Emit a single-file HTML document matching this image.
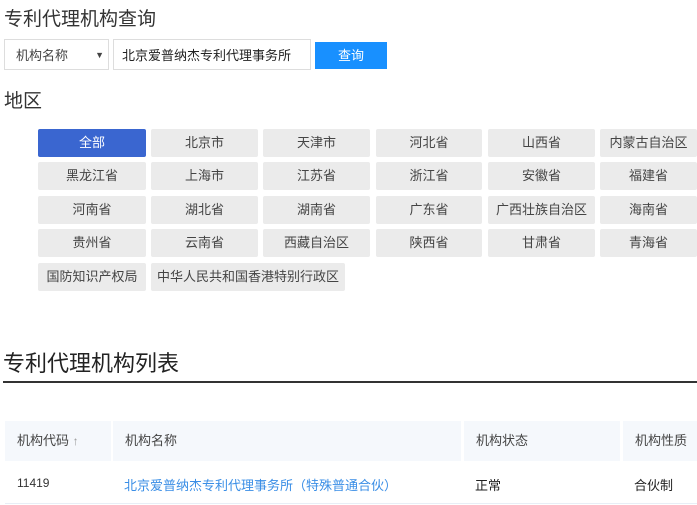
<!DOCTYPE html><html><head><meta charset="utf-8"><style>
body{margin:0;width:697px;height:505px;overflow:hidden;background:#fff;font-family:"Liberation Sans","Noto Sans CJK SC",sans-serif;color:#333;position:relative}
.a{position:absolute;white-space:nowrap}
.b{position:absolute;height:28px;line-height:28px;text-align:center;font-size:13px;background:#ebebeb;color:#444;border-radius:2px}
.h{background:#f5f8fc;position:absolute;top:421px;height:40px;line-height:40px;font-size:13px;color:#444;padding-left:12px;box-sizing:border-box}
</style></head><body>
<div class="a" style="left:4px;top:4px;font-size:19px;color:#333">专利代理机构查询</div>
<div class="a" style="left:4px;top:39px;width:105px;height:31px;border:1px solid #ddd;font-size:13px;line-height:31px;box-sizing:border-box;padding-left:11px;color:#444">机构名称<span style="position:absolute;right:4px;font-size:9px">▼</span></div>
<div class="a" style="left:113px;top:39px;width:198px;height:31px;border:1px solid #ddd;font-size:13px;line-height:31px;box-sizing:border-box;padding-left:8px;color:#222">北京爱普纳杰专利代理事务所</div>
<div class="a" style="left:315px;top:42px;width:72px;height:27px;background:#1890ff;color:#fff;font-size:13px;line-height:27px;text-align:center">查询</div>
<div class="a" style="left:4px;top:86px;font-size:19px">地区</div>
<div class="b" style="left:38px;top:129px;width:108px;background:#3a66d0;color:#fff">全部</div>
<div class="b" style="left:151px;top:129px;width:107px">北京市</div>
<div class="b" style="left:263px;top:129px;width:107px">天津市</div>
<div class="b" style="left:376px;top:129px;width:106px">河北省</div>
<div class="b" style="left:488px;top:129px;width:107px">山西省</div>
<div class="b" style="left:600px;top:129px;width:97px">内蒙古自治区</div>
<div class="b" style="left:38px;top:162px;width:108px">黑龙江省</div>
<div class="b" style="left:151px;top:162px;width:107px">上海市</div>
<div class="b" style="left:263px;top:162px;width:107px">江苏省</div>
<div class="b" style="left:376px;top:162px;width:106px">浙江省</div>
<div class="b" style="left:488px;top:162px;width:107px">安徽省</div>
<div class="b" style="left:600px;top:162px;width:97px">福建省</div>
<div class="b" style="left:38px;top:196px;width:108px">河南省</div>
<div class="b" style="left:151px;top:196px;width:107px">湖北省</div>
<div class="b" style="left:263px;top:196px;width:107px">湖南省</div>
<div class="b" style="left:376px;top:196px;width:106px">广东省</div>
<div class="b" style="left:488px;top:196px;width:107px">广西壮族自治区</div>
<div class="b" style="left:600px;top:196px;width:97px">海南省</div>
<div class="b" style="left:38px;top:229px;width:108px">贵州省</div>
<div class="b" style="left:151px;top:229px;width:107px">云南省</div>
<div class="b" style="left:263px;top:229px;width:107px">西藏自治区</div>
<div class="b" style="left:376px;top:229px;width:106px">陕西省</div>
<div class="b" style="left:488px;top:229px;width:107px">甘肃省</div>
<div class="b" style="left:600px;top:229px;width:97px">青海省</div>
<div class="b" style="left:38px;top:263px;width:108px">国防知识产权局</div>
<div class="b" style="left:151px;top:263px;width:194px">中华人民共和国香港特别行政区</div>
<div class="a" style="left:3px;top:346px;font-size:22px;color:#222">专利代理机构列表</div>
<div class="a" style="left:3px;top:381px;width:694px;height:2px;background:#333"></div>
<div class="h" style="left:5px;width:106px">机构代码 <span style="color:#999;font-size:12px">↑</span></div>
<div class="h" style="left:113px;width:348px">机构名称</div>
<div class="h" style="left:464px;width:156px">机构状态</div>
<div class="h" style="left:623px;width:74px">机构性质</div>
<div class="a" style="left:17px;top:476px;font-size:12px;color:#333">11419</div>
<div class="a" style="left:124px;top:475px;font-size:13px;color:#3a8ee6">北京爱普纳杰专利代理事务所（特殊普通合伙）</div>
<div class="a" style="left:475px;top:475px;font-size:13px;color:#222">正常</div>
<div class="a" style="left:634px;top:475px;font-size:13px;color:#222">合伙制</div>
<div class="a" style="left:5px;top:503px;width:692px;height:1px;background:#e8eef6"></div>
</body></html>
